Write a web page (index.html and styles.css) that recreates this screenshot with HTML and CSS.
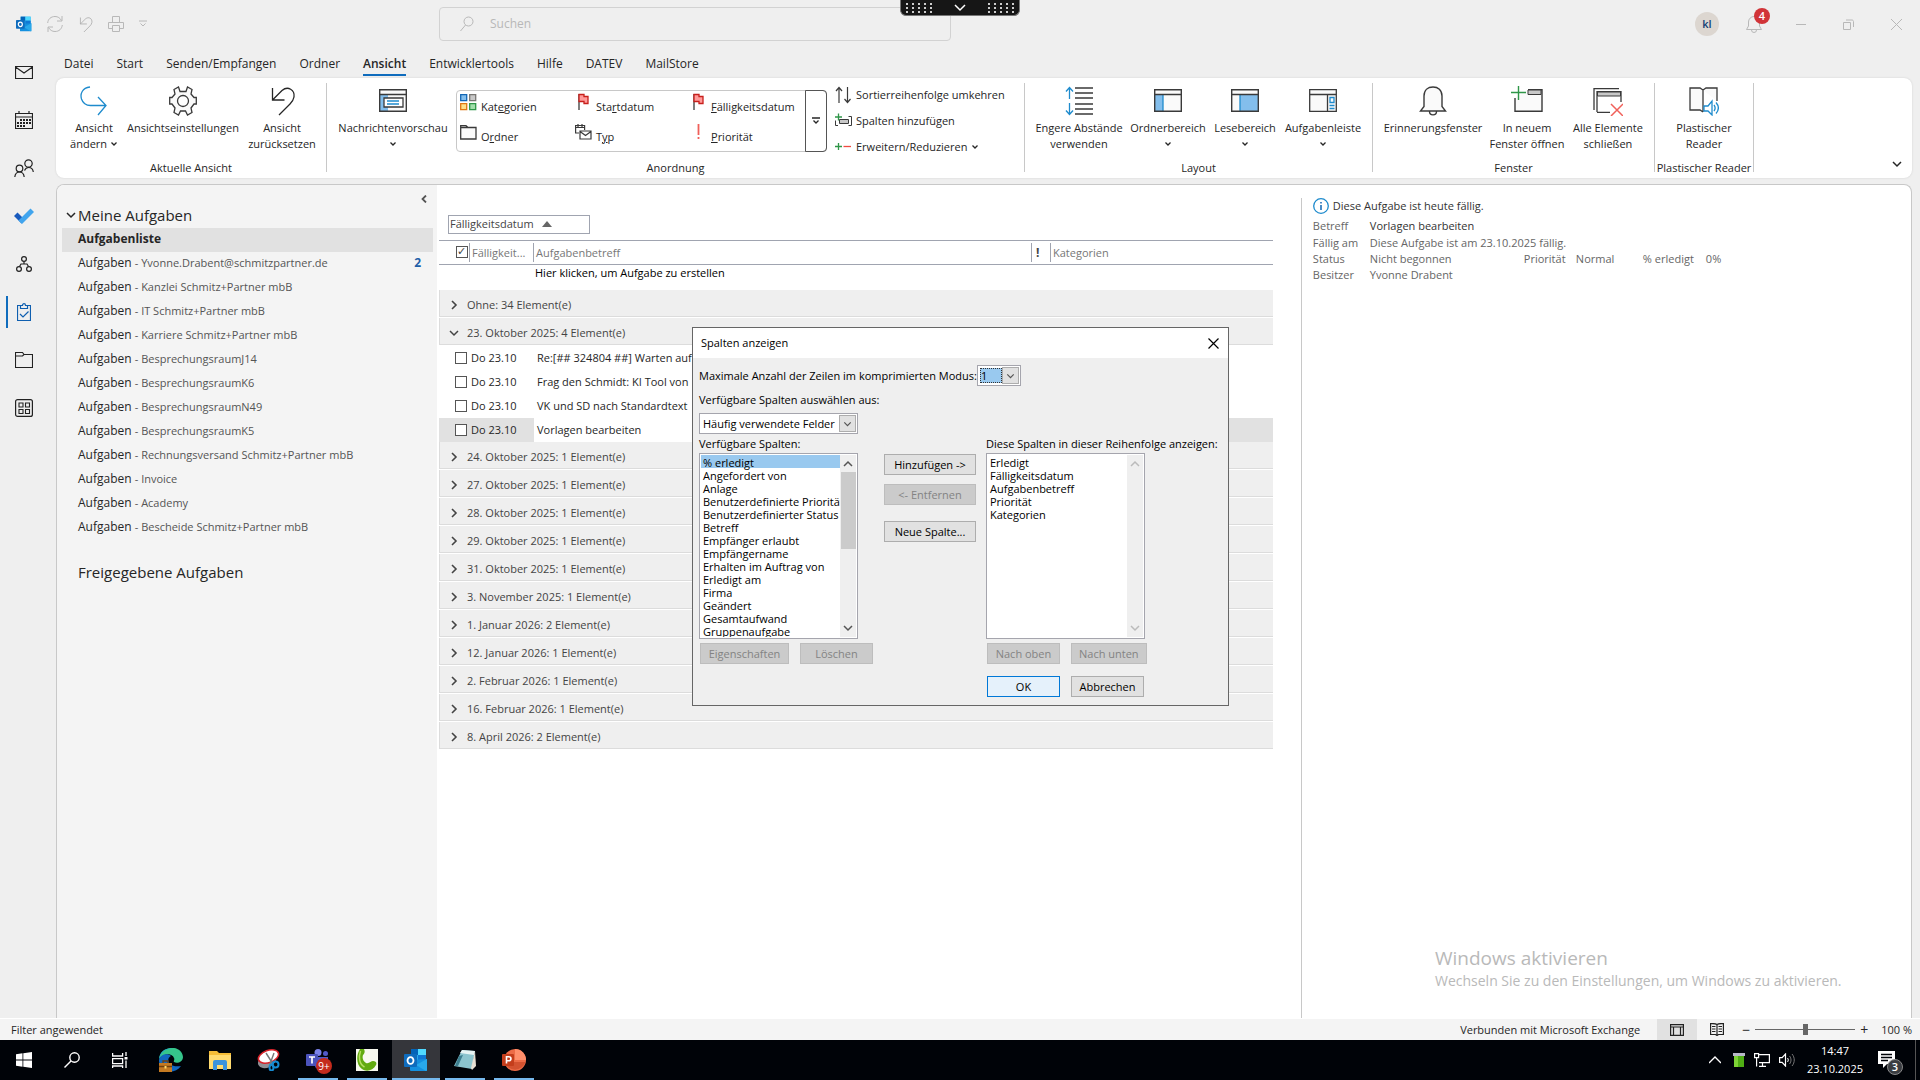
FILE: index.html
```html
<!DOCTYPE html>
<html lang="de">
<head>
<meta charset="utf-8">
<title>Aufgabenliste - Outlook</title>
<link rel="stylesheet" href="styles.css">
</head>
<body>
<svg class="sprite" aria-hidden="true">
  <symbol id="chev-down" viewBox="0 0 8 8"><path d="M1.5 2.5 4 5l2.500-2.500" fill="none" stroke="currentColor" stroke-width="1.300"/></symbol>
  <symbol id="chev-right" viewBox="0 0 10 10"><path d="M3 1l4 4-4 4" fill="none" stroke="currentColor" stroke-width="1.600"/></symbol>
  <symbol id="chev-open" viewBox="0 0 10 10"><path d="M1 3l4 4 4-4" fill="none" stroke="currentColor" stroke-width="1.500"/></symbol>
  <symbol id="undo" viewBox="0 0 28 30"><path d="M4.500 2v12h12M4.500 14 14 4.500C20 -.5 27 4 26 11c-.5 3-2 5-4 7L11 29" fill="none" stroke="currentColor" stroke-width="1.300"/></symbol>
  <symbol id="flag" viewBox="0 0 14 18"><path d="M2.500 1v16" stroke="#3a3a3a" stroke-width="1.300"/><path d="M2.500 1.500h5v2h4v7h-4v-2h-5z" fill="#ff9a9a" stroke="#c8201c" stroke-width="1.300"/></symbol>
  <symbol id="outlook" viewBox="0 0 24 24"><path d="M7 1h15v12H7z" fill="#28a8ea"/><path d="M7 1h7v6H7z" fill="#0364b8"/><path d="M14 1h8v6h-8z" fill="#50d9ff"/><path d="M14 7h8v6h-8z" fill="#0f78d4"/><path d="M6 12l17-1v11a1 1 0 0 1-1 1H7a1 1 0 0 1-1-1z" fill="#1490df"/><path d="M23 11v11a1 1 0 0 1-1 1L12 17z" fill="#28a8ea"/><rect x="0" y="6" width="13" height="13" rx="1" fill="#0f6cbd"/><ellipse cx="6.500" cy="12.500" rx="3" ry="3.400" fill="none" stroke="#fff" stroke-width="1.800"/></symbol>
</svg>

<div class="app">
  <header class="topbar">
    <div class="quick">
      <svg class="ic16"><use href="#outlook"/></svg>
      <button type="button" aria-label="Senden/Empfangen"><svg width="16" height="18" viewBox="0 0 16 18"><path d="M.7 8C1 4 4 1.500 8 1.500c3 0 5 1.500 6.500 4M15 1v5h-5M15.300 10c-.5 4-3.300 6.500-7.300 6.500-3 0-5-1.500-6.500-4M1 17v-5h5" fill="none" stroke="currentColor"/></svg></button>
      <button type="button" aria-label="Rückgängig"><svg width="15" height="17" class="bold-line"><use href="#undo"/></svg></button>
      <button type="button" aria-label="Drucken"><svg width="16" height="16" viewBox="0 0 16 16"><path d="M4.500 6V.5h7V6M4 12.500H.5v-6h15v6H12M4.500 9.500h7v6h-7z" fill="none" stroke="currentColor"/></svg></button>
      <button type="button" aria-label="Anpassen"><svg width="8" height="8" viewBox="0 0 8 8"><path d="M0 1h8M1.500 3.500 4 6l2.500-2.500" fill="none" stroke="currentColor"/></svg></button>
    </div>
    <label class="search"><svg width="14" height="16" viewBox="0 0 14 16"><circle cx="8.500" cy="5.500" r="4.500" fill="none" stroke="currentColor"/><path d="M5.500 9 .5 15" stroke="currentColor"/></svg><input type="search" placeholder="Suchen" aria-label="Suchen"></label>
    <div class="winctl">
      <span class="avatar">kl</span>
      <button type="button" class="bell" aria-label="Benachrichtigungen"><svg width="16" height="17" viewBox="0 0 16 17"><path d="M.5 13.500h15L13.500 10V6a5.500 5.500 0 0 0-11 0v4zM5.500 14a2.500 2.500 0 0 0 5 0" fill="none" stroke="currentColor"/></svg><span class="badge">4</span></button>
      <button type="button" aria-label="Minimieren"><svg width="10" height="10"><path d="M0 5.500h10" stroke="currentColor"/></svg></button>
      <button type="button" aria-label="Verkleinern"><svg width="11" height="11"><path d="M.5 3.500h7v7h-7zM3 1h6c.8 0 1.500.7 1.500 1.500V8" fill="none" stroke="currentColor"/></svg></button>
      <button type="button" aria-label="Schließen"><svg width="11" height="11"><path d="M0 0l11 11M11 0 0 11" stroke="currentColor"/></svg></button>
    </div>
    <div class="session"><i class="dots"></i><svg width="12" height="8" viewBox="0 0 12 8"><path d="M1 1l5 5 5-5" fill="none" stroke="#fff" stroke-width="1.500"/></svg><i class="dots"></i></div>
  </header>

  <div class="middle">
    <nav class="rail" aria-label="Module">
      <button type="button" aria-label="E-Mail"><svg width="18" height="13" viewBox="0 0 18 13"><path d="M.5.5h17v12H.5zM.5 1 9 7l8.500-6" fill="none" stroke="currentColor" stroke-width="1.200"/></svg></button>
      <button type="button" aria-label="Kalender"><svg width="18" height="18" viewBox="0 0 18 18"><path d="M.5 2.500h17v15H.5zM.5 6h17M4 0v3M14 0v3" fill="none" stroke="currentColor" stroke-width="1.200"/><path d="M5 9h11M2 12h14M2 15h8" stroke="currentColor" stroke-width="2" stroke-dasharray="2 1"/></svg></button>
      <button type="button" aria-label="Personen"><svg width="20" height="18" viewBox="0 0 20 18"><path d="M.8 18c.4-3.500 2-5 4.700-5s4.300 1.500 4.700 5M10.500 11.500c.8-2 2.300-3 4.200-3 2.600 0 4.200 1.500 4.600 4.500" fill="none" stroke="currentColor" stroke-width="1.200"/><circle cx="5.500" cy="9.500" r="3.300" fill="none" stroke="currentColor" stroke-width="1.200"/><circle cx="14.500" cy="4.500" r="3.700" fill="none" stroke="currentColor" stroke-width="1.200"/></svg></button>
      <button type="button" aria-label="To Do"><svg width="20" height="16" viewBox="0 0 20 16"><path d="M0 8l3.500-3.500L11 12l-3.500 3.500z" fill="#185abd"/><path d="M4.500 12.500 16.500.5 20 4 8 16z" fill="#41a5ee"/></svg></button>
      <button type="button" aria-label="Organisation"><svg width="16" height="16" viewBox="0 0 16 16"><g fill="none" stroke="currentColor" stroke-width="1.200"><circle cx="8" cy="3" r="2.400"/><circle cx="3" cy="13" r="2.400"/><circle cx="13" cy="13" r="2.400"/><path d="M8 5.500V8M3.500 10.500 5 8h6l1.500 2.500"/></g></svg></button>
      <button type="button" class="active" aria-label="Aufgaben"><svg width="14" height="18" viewBox="0 0 14 18"><path d="M3.500 2.500h-3v15h13v-15h-3M3.500 5.500v-3h2c0-2.500 3-2.500 3 0h2v3zM3 11l3 3 5.500-5.500" fill="none" stroke="currentColor" stroke-width="1.200"/></svg></button>
      <button type="button" aria-label="Ordner"><svg width="18" height="16" viewBox="0 0 18 16"><path d="M.5 15.500V.5h7l1.500 2h8.500v13zM.5 4h7L9 2.500" fill="none" stroke="currentColor" stroke-width="1.100"/></svg></button>
      <button type="button" aria-label="Weitere Apps"><svg width="18" height="18" viewBox="0 0 18 18"><rect x=".6" y=".6" width="16.800" height="16.800" rx="2" fill="none" stroke="currentColor" stroke-width="1.200"/><path d="M4 4h4v4H4zM10.500 4h4v4h-4zM4 10.500h4v4H4zM10.500 10.500h4v4h-4z" fill="none" stroke="currentColor" stroke-width="1.100"/></svg></button>
    </nav>

    <div class="content">
      <nav class="tabs">
        <a href="#">Datei</a><a href="#">Start</a><a href="#">Senden/Empfangen</a><a href="#">Ordner</a><a href="#" class="current">Ansicht</a><a href="#">Entwicklertools</a><a href="#">Hilfe</a><a href="#">DATEV</a><a href="#">MailStore</a>
      </nav>

      <section class="ribbon">
        <div class="group">
          <div class="tools view-tools">
            <button type="button"><svg width="28" height="30" viewBox="0 0 28 30"><path d="M10 1C2 2 0 8 1.500 13c1.500 4.500 5 6.500 9 6.500h15M18 11l8 8.500L18 29" fill="none" stroke="#1e8bcd" stroke-width="1.300"/></svg>Ansicht<span>ändern <svg class="c8"><use href="#chev-down"/></svg></span></button>
            <button type="button"><svg width="28" height="30" viewBox="0 0 28 30"><path d="M11 5.500 9.500 1 5 3.500l1 4.500-3 3.500H.7v6.500H3l3 4-1 4.500L9.500 29l2-4h5l2 4 4.500-2.500-1-4.500 3-4h2.300v-6.500H25L22 8l1-4.500L18.500 1 17 5.500z" fill="#fafafa" stroke="#3a3a3a" stroke-width="1.300"/><circle cx="14" cy="15" r="5.500" fill="#fff" stroke="#3a3a3a" stroke-width="1.300"/></svg>Ansichtseinstellungen</button>
            <button type="button"><svg width="28" height="30"><use href="#undo"/></svg>Ansicht<span>zurücksetzen</span></button>
          </div>
          <h2>Aktuelle Ansicht</h2>
        </div>
        <div class="group">
          <div class="tools arrange-tools">
            <button type="button"><svg width="28" height="30" viewBox="0 0 28 30"><path d="M.7 3.700h26.600v21.600H.7z" fill="#fafafa"/><path d="M1 9h8v16H1z" fill="#83beec"/><path d="M.7 3.700h26.600v21.600H.7zM.7 8.500h26.600" fill="none" stroke="#3a3a3a" stroke-width="1.400"/><path d="M5 12h19v9H5z" fill="#fff" stroke="#3a3a3a" stroke-width="1.300"/><path d="M8 15h12M8 18h12" stroke="#1e8bcd" stroke-width="1.300"/></svg>Nachrichtenvorschau<svg class="c8 drop"><use href="#chev-down"/></svg></button>
            <div class="gallery">
              <div class="gallery-items">
                <button type="button"><svg width="17" height="18" viewBox="0 0 17 18"><path d="M.7 1.700h6v6h-6z" fill="#83beec" stroke="#1266b5" stroke-width="1.300"/><path d="M9.700 1.700h6v6h-6z" fill="#c8c8c8" stroke="#797774" stroke-width="1.300"/><path d="M.7 10.700h6v6h-6z" fill="#ffe08a" stroke="#e07814" stroke-width="1.300"/><path d="M9.700 10.700h6v6h-6z" fill="#a2dfab" stroke="#2f9648" stroke-width="1.300"/></svg><span>Kat<u>e</u>gorien</span></button>
                <button type="button"><svg width="14" height="18"><use href="#flag"/></svg><span>Sta<u>r</u>tdatum</span></button>
                <button type="button"><svg width="14" height="18"><use href="#flag"/></svg><span><u>F</u>älligkeitsdatum</span></button>
                <button type="button"><svg width="17" height="18" viewBox="0 0 17 18"><path d="M.7 16V2.700H6L8 4.500h8V16zM.7 4.500H8" fill="#fafafa" stroke="#3a3a3a" stroke-width="1.300"/></svg><span>O<u>r</u>dner</span></button>
                <button type="button"><svg width="17" height="18" viewBox="0 0 17 18"><path d="M4 10H.6V2.500h9V7M.6 4.500h9M3 1v3M7 1v3" fill="none" stroke="#3a3a3a" stroke-width="1.200"/><path d="M5 8h11v8H5zM5 8.500l5.500 4L16 8.500" fill="#fff" stroke="#3a3a3a" stroke-width="1.200"/></svg><span>T<u>y</u>p</span></button>
                <button type="button"><svg width="14" height="18" viewBox="0 0 14 18"><path d="M7 1v11M7 14v2" stroke="#f0605a" stroke-width="1.800"/></svg><span><u>P</u>riorität</span></button>
              </div>
              <button type="button" class="more" aria-label="Weitere"><svg width="8" height="8" viewBox="0 0 8 8"><path d="M0 1h8M1.500 3.500 4 6l2.500-2.500" fill="none" stroke="currentColor" stroke-width="1.300"/></svg></button>
            </div>
            <div class="small-tools">
              <button type="button"><svg width="17" height="18" viewBox="0 0 17 18"><path d="M4 17V1.500M1 5l3-3.500L7 5M12.500 1v15.500M9.500 13l3 3.500 3-3.500" fill="none" stroke="#3a3a3a" stroke-width="1.200"/></svg>Sortierreihenfolge umkehren</button>
              <button type="button"><svg width="17" height="18" viewBox="0 0 17 18"><path d="M4.500 7.500h9v4h-9z" fill="#c8c8c8" stroke="#3a3a3a"/><path d="M3 13.500H.5v-5M13.500 4.500h3v9h-3" fill="none" stroke="#3a3a3a"/><path d="M0 5h7M3.500 1.500v7" stroke="#2f9648" stroke-width="1.300"/></svg>Spalten hinzufügen</button>
              <button type="button"><svg width="17" height="18" viewBox="0 0 17 18"><path d="M0 8.500h7M3.500 5v7" stroke="#2f9648" stroke-width="1.300"/><path d="M8.500 8.500H16" stroke="#f04a40" stroke-width="1.300"/></svg>Erweitern/Reduzieren <svg class="c8"><use href="#chev-down"/></svg></button>
            </div>
          </div>
          <h2>Anordnung</h2>
        </div>
        <div class="group">
          <div class="tools layout-tools">
            <button type="button"><svg width="28" height="30" viewBox="0 0 28 30"><path d="M10 2h18M10 7h18M10 12h18M10 18h18M10 23h18M10 28h18" stroke="#3a3a3a" stroke-width="1.300"/><path d="M4.500 13V1.500M1 5.500l3.500-4L8 5.500M4.500 17v11.500M1 24.500l3.500 4 3.500-4" fill="none" stroke="#1e8bcd" stroke-width="1.300"/></svg>Engere Abstände<span>verwenden</span></button>
            <button type="button"><svg width="28" height="30" viewBox="0 0 28 30"><path d="M.7 3.700h26.600v21.600H.7z" fill="#fafafa"/><path d="M1 9h8v16H1z" fill="#83beec"/><path d="M9 9v16" stroke="#1e8bcd" stroke-width="1.300"/><path d="M.7 3.700h26.600v21.600H.7zM.7 8.500h26.600" fill="none" stroke="#3a3a3a" stroke-width="1.400"/></svg>Ordnerbereich<svg class="c8 drop"><use href="#chev-down"/></svg></button>
            <button type="button"><svg width="28" height="30" viewBox="0 0 28 30"><path d="M.7 3.700h26.600v21.600H.7z" fill="#fafafa"/><path d="M9 9h18v16H9z" fill="#83beec"/><path d="M9 9v16" stroke="#1e8bcd" stroke-width="1.300"/><path d="M.7 3.700h26.600v21.600H.7zM.7 8.500h26.600" fill="none" stroke="#3a3a3a" stroke-width="1.400"/></svg>Lesebereich<svg class="c8 drop"><use href="#chev-down"/></svg></button>
            <button type="button"><svg width="28" height="30" viewBox="0 0 28 30"><path d="M.7 3.700h26.600v21.600H.7zM.7 8.500h26.600M18.500 9v16" fill="#fafafa" stroke="#3a3a3a" stroke-width="1.300"/><path d="M21 11.500h4v5h-4zM20.500 19.500h5M20.500 22.500h5" fill="none" stroke="#1e8bcd" stroke-width="1.300"/></svg>Aufgabenleiste<svg class="c8 drop"><use href="#chev-down"/></svg></button>
          </div>
          <h2>Layout</h2>
        </div>
        <div class="group">
          <div class="tools window-tools">
            <button type="button"><svg width="28" height="30" viewBox="0 0 28 30"><path d="M1.500 25h25L23 20.500V10C23 4 19 1 14 1S5 4 5 10v10.500zM10.500 25.500c0 4.500 7 4.500 7 0" fill="#fafafa" stroke="#3a3a3a" stroke-width="1.400"/></svg>Erinnerungsfenster</button>
            <button type="button"><svg width="32" height="30" viewBox="0 0 32 30"><path d="M4 12v13.300h27V3.700H17" fill="#fafafa" stroke="#3a3a3a" stroke-width="1.400"/><path d="M17 4h13v4.500H17z" fill="#c8c8c8" stroke="#3a3a3a"/><path d="M0 6.500h15M7.500-1v15" stroke="#2f9648" stroke-width="1.400"/></svg>In neuem<span>Fenster öffnen</span></button>
            <button type="button"><svg width="30" height="30" viewBox="0 0 30 30"><path d="M1 24V2.700h25M4 26V5.700h24V16M4 26.300h13" fill="none" stroke="#3a3a3a" stroke-width="1.300"/><path d="M4.500 6h23v4h-23z" fill="#c8c8c8" stroke="#3a3a3a"/><path d="M18 18l12 12M30 18 18 30" stroke="#f0605a" stroke-width="1.500"/></svg>Alle Elemente<span>schließen</span></button>
          </div>
          <h2>Fenster</h2>
        </div>
        <div class="group">
          <div class="tools reader-tools">
            <button type="button"><svg width="30" height="30" viewBox="0 0 30 30"><path d="M14 26l-3-2H1V2h10l3 2v22M14 4l3-2h11v13" fill="#fafafa" stroke="#3a3a3a" stroke-width="1.300"/><path d="M15 20h4l4-5v14l-4-4h-4zM25 19c1.500 2 1.500 4 0 6M27 16.500c3 3.500 3 7.500 0 11" fill="#fff" stroke="#1e8bcd" stroke-width="1.300"/></svg>Plastischer<span>Reader</span></button>
          </div>
          <h2>Plastischer Reader</h2>
        </div>
        <button type="button" class="collapse" aria-label="Menüband reduzieren"><svg width="10" height="10"><use href="#chev-open"/></svg></button>
      </section>

      <div class="panel">
        <aside class="folders">
          <button type="button" class="fold" aria-label="Ordnerbereich minimieren"><svg width="6" height="8" viewBox="0 0 6 8"><path d="M5 .5 1.500 4 5 7.500" fill="none" stroke="currentColor" stroke-width="1.800"/></svg></button>
          <h3><svg width="10" height="10"><use href="#chev-open"/></svg>Meine Aufgaben</h3>
          <ul>
            <li class="sel"><a href="#">Aufgabenliste</a></li>
            <li><a href="#">Aufgaben <small>- Yvonne.Drabent@schmitzpartner.de</small></a><b>2</b></li>
            <li><a href="#">Aufgaben <small>- Kanzlei Schmitz+Partner mbB</small></a></li>
            <li><a href="#">Aufgaben <small>- IT Schmitz+Partner mbB</small></a></li>
            <li><a href="#">Aufgaben <small>- Karriere Schmitz+Partner mbB</small></a></li>
            <li><a href="#">Aufgaben <small>- BesprechungsraumJ14</small></a></li>
            <li><a href="#">Aufgaben <small>- BesprechungsraumK6</small></a></li>
            <li><a href="#">Aufgaben <small>- BesprechungsraumN49</small></a></li>
            <li><a href="#">Aufgaben <small>- BesprechungsraumK5</small></a></li>
            <li><a href="#">Aufgaben <small>- Rechnungsversand Schmitz+Partner mbB</small></a></li>
            <li><a href="#">Aufgaben <small>- Invoice</small></a></li>
            <li><a href="#">Aufgaben <small>- Academy</small></a></li>
            <li><a href="#">Aufgaben <small>- Bescheide Schmitz+Partner mbB</small></a></li>
          </ul>
          <h3 class="shared">Freigegebene Aufgaben</h3>
        </aside>

        <main class="tasks">
          <button type="button" class="sort">Fälligkeitsdatum <svg width="10" height="6"><path d="M0 6l5-6 5 6z" fill="#666"/></svg></button>
          <table>
            <colgroup><col class="c-check"><col class="c-due"><col class="c-subject"><col class="c-prio"><col></colgroup>
            <thead><tr><th><div><input type="checkbox" checked aria-label="Erledigt"></div></th><th><div>Fälligkeit...</div></th><th><div>Aufgabenbetreff</div></th><th><div class="bang">!</div></th><th><div>Kategorien</div></th></tr></thead>
            <tbody>
              <tr class="new"><td></td><td></td><td colspan="3">Hier klicken, um Aufgabe zu erstellen</td></tr>
              <tr class="grp"><td colspan="5"><div><svg class="c10"><use href="#chev-right"/></svg>Ohne: 34 Element(e)</div></td></tr>
              <tr class="grp"><td colspan="5"><div><svg class="c10"><use href="#chev-open"/></svg>23. Oktober 2025: 4 Element(e)</div></td></tr>
              <tr class="task"><td><input type="checkbox" aria-label="Erledigt"></td><td>Do 23.10</td><td>Re:[## 324804 ##] Warten auf</td><td></td><td></td></tr>
              <tr class="task"><td><input type="checkbox" aria-label="Erledigt"></td><td>Do 23.10</td><td>Frag den Schmidt: KI Tool von</td><td></td><td></td></tr>
              <tr class="task"><td><input type="checkbox" aria-label="Erledigt"></td><td>Do 23.10</td><td>VK und SD nach Standardtext</td><td></td><td></td></tr>
              <tr class="task chosen"><td><input type="checkbox" aria-label="Erledigt"></td><td>Do 23.10</td><td class="edit">Vorlagen bearbeiten</td><td></td><td></td></tr>
              <tr class="grp"><td colspan="5"><div><svg class="c10"><use href="#chev-right"/></svg>24. Oktober 2025: 1 Element(e)</div></td></tr>
              <tr class="grp"><td colspan="5"><div><svg class="c10"><use href="#chev-right"/></svg>27. Oktober 2025: 1 Element(e)</div></td></tr>
              <tr class="grp"><td colspan="5"><div><svg class="c10"><use href="#chev-right"/></svg>28. Oktober 2025: 1 Element(e)</div></td></tr>
              <tr class="grp"><td colspan="5"><div><svg class="c10"><use href="#chev-right"/></svg>29. Oktober 2025: 1 Element(e)</div></td></tr>
              <tr class="grp"><td colspan="5"><div><svg class="c10"><use href="#chev-right"/></svg>31. Oktober 2025: 1 Element(e)</div></td></tr>
              <tr class="grp"><td colspan="5"><div><svg class="c10"><use href="#chev-right"/></svg>3. November 2025: 1 Element(e)</div></td></tr>
              <tr class="grp"><td colspan="5"><div><svg class="c10"><use href="#chev-right"/></svg>1. Januar 2026: 2 Element(e)</div></td></tr>
              <tr class="grp"><td colspan="5"><div><svg class="c10"><use href="#chev-right"/></svg>12. Januar 2026: 1 Element(e)</div></td></tr>
              <tr class="grp"><td colspan="5"><div><svg class="c10"><use href="#chev-right"/></svg>2. Februar 2026: 1 Element(e)</div></td></tr>
              <tr class="grp"><td colspan="5"><div><svg class="c10"><use href="#chev-right"/></svg>16. Februar 2026: 1 Element(e)</div></td></tr>
              <tr class="grp"><td colspan="5"><div><svg class="c10"><use href="#chev-right"/></svg>8. April 2026: 2 Element(e)</div></td></tr>
            </tbody>
          </table>
        </main>

        <section class="reading">
          <p class="notice"><svg width="16" height="16" viewBox="0 0 16 16"><circle cx="8" cy="8" r="7.300" fill="#fff" stroke="#1e8bcd" stroke-width="1.300"/><path d="M8 7v5M8 4v1.500" stroke="#1e6fb8" stroke-width="1.600"/></svg>Diese Aufgabe ist heute fällig.</p>
          <dl>
            <dt>Betreff</dt><dd class="wide subject">Vorlagen bearbeiten</dd>
            <dt>Fällig am</dt><dd class="wide">Diese Aufgabe ist am 23.10.2025 fällig.</dd>
            <dt>Status</dt><dd>Nicht begonnen</dd><dt>Priorität</dt><dd>Normal</dd><dt>% erledigt</dt><dd>0%</dd>
            <dt>Besitzer</dt><dd class="wide">Yvonne Drabent</dd>
          </dl>
        </section>
      </div>
    </div>
  </div>

  <footer class="status">
    <span>Filter angewendet</span>
    <div class="status-right">
      <span>Verbunden mit Microsoft Exchange</span>
      <button type="button" class="on" aria-label="Normal"><svg width="14" height="12" viewBox="0 0 14 12"><path d="M.6.6h12.800v10.800H.6zM.6 3h12.800M3.500 3v8M10.500 3v8" fill="none" stroke="#222" stroke-width="1.200"/></svg></button>
      <button type="button" aria-label="Lesen"><svg width="14" height="13" viewBox="0 0 14 13"><path d="M7 1.500C5 .3 3 .5.600.6v10.900h4.900L7 12.500l1.500-1h4.900V.6C11 .5 9 .3 7 1.500zM7 1.500v11M2 3.500h3.500M2 6h3.500M2 8.500h3.500M8.500 3.500H12M8.500 6H12M8.500 8.500H12" fill="none" stroke="#222" stroke-width="1.200"/></svg></button>
      <div class="zoom"><span>−</span><input type="range" min="0" max="100" value="50" aria-label="Zoom"><span>+</span></div>
      <span>100 %</span>
    </div>
  </footer>

  <div class="taskbar">
    <div class="launch">
      <button type="button" aria-label="Start"><svg width="16" height="16" viewBox="0 0 16 16"><path d="M0 2.200 6.500 1.300v6.300H0zM7.300 1.200 16 0v7.600H7.300zM0 8.400h6.500v6.300L0 13.800zM7.300 8.400H16V16l-8.700-1.200z" fill="#fff"/></svg></button>
      <button type="button" aria-label="Suche"><svg width="16" height="16" viewBox="0 0 16 16"><circle cx="10.500" cy="5.500" r="4.700" fill="none" stroke="#fff" stroke-width="1.400"/><path d="M7 9 .5 15.500" stroke="#fff" stroke-width="1.400"/></svg></button>
      <button type="button" aria-label="Taskansicht"><svg width="16" height="16" viewBox="0 0 16 16"><path d="M.6 1v3h10V1M.6 6.600h10v5H.6zM.6 16v-2h10v2M14 0v4M14 8.500V16" fill="none" stroke="#fff" stroke-width="1.300"/><path d="M12.500 5h3v2.500h-3z" fill="#fff"/></svg></button>
    </div>
    <div class="apps">
      <button type="button" aria-label="Edge"><svg width="24" height="24" viewBox="0 0 24 24"><path d="M0 11C1-3 23-4 24 9c0 5-6 7-9 5-1-1 1-2 0-4-2-5-10-5-15 1z" fill="#35c58b"/><path d="M0 11C1 3 8-1 14 1 7 0 2 4 0 11z" fill="#1b9de2"/><path d="M0 12C1 6 9 5 12 8c-5 2-4 12 10 10-4 6-12 7-17 4-4-3-5-6-5-10z" fill="#1168c0"/><path d="M0 15h13v9H0z" fill="#c47a22"/><path d="M4 15v-2h5v2M0 18.500h13" fill="none" stroke="#70400c" stroke-width="1.300"/><path d="M5.500 18h2v2.500h-2z" fill="#ffd868"/></svg></button>
      <button type="button" aria-label="Explorer"><svg width="22" height="20" viewBox="0 0 22 20"><path d="M0 1h8l2 2h12v16H0z" fill="#f5bd37"/><path d="M0 5h22v14H0z" fill="#ffdb70"/><path d="M4 20v-8q0-2 2-2h10q2 0 2 2v8h-4v-5H8v5z" fill="#3a93dd"/></svg></button>
      <button type="button" aria-label="Snipping Tool"><svg width="24" height="22" viewBox="0 0 24 22"><ellipse cx="10" cy="12" rx="9.500" ry="6.500" fill="#8f8f95" transform="rotate(-25 10 12)"/><ellipse cx="11.500" cy="7.500" rx="10.500" ry="6" fill="#fff" stroke="#d8232a" stroke-width="1.600" transform="rotate(-20 11.500 7.500)"/><path d="M9 4l7 11M17 4l-4 11" stroke="#777" stroke-width="1.400"/><circle cx="18.500" cy="15.500" r="3" fill="none" stroke="#168bd2" stroke-width="2"/><ellipse cx="14.500" cy="18.500" rx="2" ry="3" fill="none" stroke="#168bd2" stroke-width="2"/></svg></button>
      <button type="button" class="open" aria-label="Teams"><svg width="24" height="22" viewBox="0 0 24 22"><circle cx="12" cy="3.500" r="3.500" fill="#7b83eb"/><circle cx="19.500" cy="4.500" r="2.500" fill="#5059c9"/><path d="M8 8h14v8q-4 6-8 5-6-2-6-7z" fill="#5059c9"/><rect y="5" width="12" height="12" rx="1" fill="#4b53bc"/><path d="M3 8h6M6 8v6.500" stroke="#fff" stroke-width="1.700"/></svg><span class="badge">9+</span></button>
      <button type="button" class="open" aria-label="Telefon"><svg width="22" height="22" viewBox="0 0 22 22"><path d="M0 0h22v22H0z" fill="#f7f8ef"/><path d="M4 0h4c1 2 1 4-1 6-1 3 0 6 3 8 3 1 5-2 7-2 3 0 4 2 3 4-3 6-10 7-14 4C0 16 0 6 4 0z" fill="#62ab10"/><path d="M4.500 2C2.500 8 3 15 8.500 18" fill="none" stroke="#b7df62" stroke-width="1.500"/></svg></button>
      <button type="button" class="open front" aria-label="Outlook"><svg width="24" height="24"><use href="#outlook"/></svg></button>
      <button type="button" class="open" aria-label="Editor"><svg width="22" height="22" viewBox="0 0 22 22"><path d="M8 1l13 1-3 18L0 17z" fill="#8cc5cf"/><path d="M8 1l13 1-1 4L6 4z" fill="#e7f4f4"/><path d="M21 2l1 15-4 4-1-2z" fill="#e8e0d4"/><path d="M5 7l4-1-5 11-3 0z" fill="#3d7f90"/></svg></button>
      <button type="button" class="open" aria-label="PowerPoint"><svg width="24" height="24" viewBox="0 0 24 24"><circle cx="13" cy="12" r="11" fill="#ed6c47"/><path d="M13 1a11 11 0 0 1 11 11H13z" fill="#ff8f6b"/><path d="M2.500 14a11 11 0 0 0 21 0z" fill="#d35230"/><rect y="6" width="12" height="12" rx="1" fill="#c43e1c"/><path d="M4.500 15.500V8.800h2.200c3 0 3 4 0 4H4.500" fill="none" stroke="#fff" stroke-width="1.600"/></svg></button>
    </div>
    <div class="tray">
      <button type="button" aria-label="Ausgeblendete Symbole"><svg width="12" height="8" viewBox="0 0 12 8"><path d="M0 7l6-6 6 6" fill="none" stroke="#fff" stroke-width="1.400"/></svg></button>
      <svg width="12" height="16" viewBox="0 0 12 16"><path d="M1 4h10v11H1z" fill="#4fae14"/><path d="M1 4h4v11H1z" fill="#7ed436"/><path d="M0 1h12v3H0z" fill="#b8b8c8"/></svg>
      <svg width="16" height="14" viewBox="0 0 16 14"><path d="M5 1.600h10.400v8H5M5 13.400h7M8.500 9.600v3.800M.6.6h4v4h-4zM2.600 4.600v8.800" fill="none" stroke="#fff" stroke-width="1.200"/></svg>
      <svg width="17" height="14" viewBox="0 0 17 14"><path d="M.6 4.600h2.500L6.500 1v12L3.100 9.400H.6z" fill="none" stroke="#fff" stroke-width="1.200"/><path d="M8.500 5c1 1.200 1 2.800 0 4" fill="none" stroke="#fff"/><path d="M10.500 3c2 2.300 2 5.700 0 8M13 1c3 3.500 3 8.500 0 12" fill="none" stroke="#777"/></svg>
      <time>14:47<br>23.10.2025</time>
      <button type="button" class="note" aria-label="Info-Center"><svg width="18" height="18" viewBox="0 0 18 18"><path d="M0 0h17v13H9l-4 4v-4H0z" fill="#fff"/><path d="M3 3.500h11M3 6.500h11M3 9.500h7" stroke="#000308" stroke-width="1.300"/></svg><span class="badge">3</span></button>
    </div>
  </div>

  <div class="watermark"><strong>Windows aktivieren</strong>Wechseln Sie zu den Einstellungen, um Windows zu aktivieren.</div>

  <form class="dialog" role="dialog" aria-labelledby="dlg-title">
    <div class="dlg-head"><span id="dlg-title">Spalten anzeigen</span><button type="button" aria-label="Schließen"><svg width="11" height="11"><path d="M.5.500l10 10M10.500.5l-10 10" stroke="#000" stroke-width="1.200"/></svg></button></div>
    <div class="dlg-body">
      <div class="rowline"><label for="maxrows">Maximale Anzahl der Zeilen im komprimierten Modus:</label><span class="combo num"><select id="maxrows"><option>1</option></select><svg width="10" height="10"><use href="#chev-open"/></svg></span></div>
      <label class="lbl" for="source">Verfügbare Spalten auswählen aus:</label>
      <span class="combo wide"><select id="source"><option>Häufig verwendete Felder</option></select><svg width="10" height="10"><use href="#chev-open"/></svg></span>
      <div class="columns">
        <div class="col">
          <label for="avail">Verfügbare Spalten:</label>
          <div class="listbox"><select id="avail" size="14"><option selected>% erledigt</option><option>Angefordert von</option><option>Anlage</option><option>Benutzerdefinierte Priorität</option><option>Benutzerdefinierter Status</option><option>Betreff</option><option>Empfänger erlaubt</option><option>Empfängername</option><option>Erhalten im Auftrag von</option><option>Erledigt am</option><option>Firma</option><option>Geändert</option><option>Gesamtaufwand</option><option>Gruppenaufgabe</option></select><div class="bar"><svg class="c10"><use href="#chev-open"/></svg><i></i><svg class="c10"><use href="#chev-open"/></svg></div></div>
          <div class="btns"><button type="button" class="btn prop" disabled>Eigenschaften</button><button type="button" class="btn" disabled>Löschen</button></div>
        </div>
        <div class="mid"><button type="button" class="btn">Hinzufügen -&gt;</button><button type="button" class="btn" disabled>&lt;- Entfernen</button><button type="button" class="btn new-col">Neue Spalte...</button></div>
        <div class="col">
          <label for="shown">Diese Spalten in dieser Reihenfolge anzeigen:</label>
          <div class="listbox"><select id="shown" size="14"><option>Erledigt</option><option>Fälligkeitsdatum</option><option>Aufgabenbetreff</option><option>Priorität</option><option>Kategorien</option></select><div class="bar off"><svg class="c10"><use href="#chev-open"/></svg><svg class="c10"><use href="#chev-open"/></svg></div></div>
          <div class="btns"><button type="button" class="btn" disabled>Nach oben</button><button type="button" class="btn" disabled>Nach unten</button></div>
          <div class="btns final"><button type="submit" class="btn ok">OK</button><button type="button" class="btn">Abbrechen</button></div>
        </div>
      </div>
    </div>
  </form>
</div>
</body>
</html>
```
FILE: styles.css
```css
* { box-sizing: border-box; }
body {
  margin: 0;
  font: 11px/16px "Open Sans", "Noto Sans", sans-serif;
  color: #262626;
  background: #efefef;
}
button, input, select { font: inherit; color: inherit; margin: 0; }
button { background: none; border: 0; padding: 0; }
a { color: inherit; text-decoration: none; }
h2, h3, p, ul, dl, dd { margin: 0; padding: 0; font-weight: 400; list-style: none; }
svg { display: block; flex: none; }
.sprite { position: absolute; width: 0; height: 0; }
.ic16 { width: 16px; height: 16px; }
.c8 { width: 8px; height: 8px; display: inline-block; }
.c10 { width: 10px; height: 10px; }
.app { position: relative; display: flex; flex-direction: column; min-height: 100vh; overflow: hidden; }

/* title bar */
.topbar { position: relative; display: flex; align-items: center; height: 48px; color: #b8b8b8; }
.quick { display: flex; align-items: center; gap: 15px; width: 439px; padding-left: 16px; }
.bold-line { stroke-width: 2px; color: #a0a0a0; }
.search { display: flex; align-items: center; gap: 14px; width: 512px; height: 34px; padding-left: 20px; border: 1px solid #d2d2d2; border-radius: 4px; }
.search input { flex: 1; border: 0; background: none; font-size: 12px; outline: 0; }
.search input::placeholder { color: #b8b8b8; opacity: 1; }
.winctl { display: flex; align-items: center; gap: 37px; margin-left: auto; padding-right: 18px; }
.avatar { width: 24px; height: 24px; margin-right: -2px; border-radius: 50%; background: #dcd6d0; color: #0f3c74; font-weight: 600; line-height: 24px; text-align: center; }
.bell { position: relative; margin: 0 -3px 0 -8px; }
.badge { position: absolute; width: 16px; height: 16px; border-radius: 50%; color: #fff; text-align: center; font-weight: 600; }
.bell .badge { left: 8px; top: -8px; background: #d13438; }
.session { position: absolute; left: 900px; top: 0; display: flex; align-items: center; justify-content: space-between; width: 120px; height: 16px; padding: 0 4px; background: #161616; border: 1px solid #777; border-top: 0; border-radius: 0 0 6px 6px; }
.dots { width: 28px; height: 12px; background: radial-gradient(circle at 2px 2px, #ccc 1px, transparent 1px) 0 0 / 6px 4px; }

/* module rail */
.middle { display: flex; flex: 1; }
.rail { width: 56px; }
.rail button { display: flex; align-items: center; justify-content: center; width: 48px; height: 48px; color: #222; }
.rail .active { color: #0f5fb0; background: linear-gradient(#0f6cbd, #0f6cbd) 6px 8px / 2px 32px no-repeat; }
.content { display: flex; flex-direction: column; flex: 1; min-width: 0; }
.tabs { display: flex; gap: 23px; height: 30px; padding: 4px 0 0 8px; font-size: 12px; line-height: 24px; }
.tabs .current { height: 24px; line-height: 24px; font-weight: 600; box-shadow: inset 0 -2px #0f6cbd; }

/* ribbon */
.ribbon { position: relative; display: flex; margin-right: 8px; padding: 5px 0 6px; background: #fff; border-radius: 8px; box-shadow: 0 0 2px #ccc; }
.group { display: flex; flex-direction: column; justify-content: space-between; height: 89px; border-right: 1px solid #c8c8c8; }
.group h2 { font-size: 11px; line-height: 8px; text-align: center; }
.tools { display: grid; color: #262626; }
.tools > button { display: flex; flex-direction: column; align-items: center; padding-top: 3px; white-space: nowrap; }
.tools > button > svg:first-child { margin-bottom: 4px; }
.drop { margin-top: 4px; }
.view-tools { grid-template-columns: 56px 122px 76px; padding: 0 6px 0 10px; }
.arrange-tools { grid-template-columns: 118px 371px 180px; gap: 4px; padding: 0 13px 0 7px; }
.layout-tools { grid-template-columns: 94px 84px 70px 86px; padding: 0 6px 0 7px; }
.window-tools { grid-template-columns: 106px 82px 80px; padding: 0 6px 0 7px; }
.reader-tools { grid-template-columns: 98px; }
.gallery { display: flex; height: 62px; margin-top: 7px; border: 1px solid #c8c8c8; border-radius: 4px; }
.gallery-items { display: grid; grid-template-columns: 115px 115px 116px; grid-template-rows: 30px 30px; flex: 1; padding-left: 3px; }
.gallery-items button { display: flex; gap: 4px; align-items: flex-start; padding-top: 2px; white-space: nowrap; }
.gallery-items button > svg { width: 17px; }
.gallery-items span { padding-top: 6px; }
.more { width: 24px; margin: -1px; border: 1px solid #555; border-radius: 0 4px 4px 0; display: flex; align-items: center; justify-content: center; }
.small-tools { display: flex; flex-direction: column; gap: 10px; padding: 4px 0 0 4px; }
.small-tools button { display: flex; align-items: center; gap: 4px; height: 16px; white-space: nowrap; }
.collapse { margin: auto 10px 3px auto; }

/* main panel */
.panel { display: flex; flex: 1; margin: 6px 8px 0 0; background: #fff; border: 1px solid #c8c8c8; border-bottom: 0; border-radius: 8px 8px 0 0; overflow: hidden; }
.folders { width: 380px; padding: 10px 4px 0 5px; background: #f4f4f4; }
.fold { display: block; margin: 0 6px 0 auto; color: #555; }
.folders h3 { display: flex; align-items: center; gap: 2px; padding: 0 0 1px 4px; font-size: 15px; line-height: 24px; }
.folders .shared { padding-left: 16px; margin-top: 20px; }
.folders li { display: flex; justify-content: space-between; height: 24px; padding: 0 12px 0 16px; font-size: 12px; line-height: 22px; }
.folders li b { color: #1e5fa8; }
.folders small { font-size: 11px; color: #555; }
.folders .sel { background: #e1e1e1; font-weight: 700; }
.tasks { flex: 842 1 0; padding: 30px 0 0 2px; min-width: 0; }
.sort { display: flex; align-items: center; gap: 8px; width: 142px; height: 19px; margin: 0 0 6px 9px; padding: 0 1px 2px; border: 1px solid #a0a4b0; color: #444; }
.tasks table { width: 100%; border-collapse: separate; border-spacing: 0; table-layout: fixed; }
.c-check { width: 31px; }
.c-due { width: 64px; }
.c-subject { width: 498px; }
.c-prio { width: 19px; }
.tasks th { height: 25px; padding: 0; border: solid #a0a4b0; border-width: 1px 0; font-weight: 400; text-align: left; color: #777; }
.tasks th div { height: 19px; padding-left: 2px; line-height: 19px; border-right: 1px solid #a0a4b0; white-space: nowrap; }
.tasks th:first-child div { padding: 3px 0 0 17px; }
.tasks th:last-child div { border: 0; }
.tasks .bang { font-weight: 700; font-size: 12px; padding-left: 4px; color: #444; }
.tasks td { padding: 0; white-space: nowrap; overflow: hidden; }
.tasks input { appearance: none; display: block; width: 12px; height: 12px; border: 1px solid #555; background: #fff; }
.tasks input:checked::after { content: "✓"; display: block; font: 700 11px/10px "DejaVu Sans", sans-serif; color: #444; }
.tasks .new td { height: 24px; padding: 0 0 9px 1px; color: #000; }
.grp td { height: 28px; }
.tasks .grp td { padding-bottom: 1px; }
.grp div { display: flex; align-items: center; gap: 8px; height: 27px; padding: 4px 0 0 9px; background: #efefef; border-bottom: 1px solid #dcdcdc; border-left: 1px solid #dcdcdc; color: #444; }
.tasks .task td { height: 24px; padding: 0 0 1px 3px; }
.tasks .task td:first-child { padding-left: 16px; }
.tasks .task td:nth-child(2) { padding-left: 1px; }
.chosen td { background: #e1e1e1; }
.chosen .edit { background: #fff; }
.reading { flex: 604 1 0; margin: 13px 0 0 28px; padding-left: 11px; border-left: 1px solid #c8c8c8; color: #666; }
.notice { display: flex; gap: 4px; color: #333; margin-bottom: 4px; }
.reading dl { display: grid; grid-template-columns: 57px 154px 52px 67px 63px 1fr; line-height: 16px; }
.reading .wide { grid-column: span 5; }
.reading .subject { color: #333; padding-bottom: 1px; }

/* status bar */
.status { display: flex; justify-content: space-between; align-items: center; height: 22px; padding: 0 8px 0 11px; background: #f4f4f4; border-top: 1px solid #fff; }
.status-right { display: flex; align-items: center; height: 21px; }
.status-right button { display: flex; align-items: center; justify-content: center; width: 40px; height: 21px; }
.status-right .on { margin-left: 17px; background: #e1e1e1; }
.zoom { display: flex; align-items: center; gap: 5px; margin: 0 13px 0 5px; font-size: 14px; }
.zoom input { appearance: none; width: 100px; height: 11px; background: linear-gradient(#666, #666) 0 5px / 100% 1px no-repeat; }
.zoom input::-webkit-slider-thumb { appearance: none; width: 5px; height: 11px; background: #666; }

/* taskbar */
.taskbar { display: flex; height: 40px; background: #000308; color: #fff; }
.launch, .apps { display: flex; }
.launch { margin-right: 3px; }
.apps { gap: 1px; }
.taskbar button { position: relative; display: flex; align-items: center; justify-content: center; }
.launch button, .apps button { width: 48px; height: 40px; }
.apps .open { background: linear-gradient(#76b9ed, #76b9ed) center bottom / 40px 2px no-repeat; }
.apps .front { background: linear-gradient(#76b9ed, #76b9ed) center bottom / 100% 2px no-repeat #35363b; }
.apps .badge { left: 22px; top: 18px; background: #c42b1c; font-size: 10px; font-weight: 400; }
.tray { display: flex; align-items: center; gap: 9px; margin: 0 4px 0 auto; padding-right: 19px; border-right: 1px solid #555; }
.tray button:first-child { margin-right: 3px; }
.tray time { margin-left: 2px; line-height: 18px; text-align: center; }
.tray .note { margin-left: 6px; }
.note .badge { left: 9px; top: 8px; background: #3a3d42; border: 1px solid #888; line-height: 14px; }

.watermark { position: absolute; left: 1435px; bottom: 89px; color: #b9b9b9; font-size: 14px; line-height: 20px; }
.watermark strong { display: block; font-size: 19px; font-weight: 400; line-height: 26px; }

/* column dialog */
.dialog { position: absolute; left: 692px; top: 327px; width: 537px; background: #efefef; border: 1px solid #666; color: #000; }
.dlg-head { display: flex; align-items: center; justify-content: space-between; height: 30px; padding: 0 9px 0 8px; background: #fff; }
.dlg-body { padding: 7px 6px 8px; }
.rowline { display: flex; align-items: center; white-space: nowrap; }
.lbl { display: block; margin: 6px 0 5px; }
.combo { position: relative; display: block; height: 21px; padding: 2px; background: #fff; border: 1px solid #a5a5ad; }
.combo select { appearance: none; display: block; width: 100%; height: 15px; padding: 0 1px; border: 0; border-radius: 0; background: none; line-height: 15px; outline: 0; }
.combo svg { position: absolute; right: 1px; top: 1px; width: 17px; height: 17px; padding: 4px 3px 3px; background: #e1e1e1; border: 1px solid #adadad; color: #555; pointer-events: none; }
.combo.num { width: 44px; }
.num select { width: 22px; background: #99c9ef; border: 1px dotted #333; padding: 0; line-height: 13px; }
.combo.wide { width: 159px; }
.columns { display: grid; grid-template-columns: 175px 92px 1fr; column-gap: 10px; margin-top: 2px; }
.col > label { display: block; margin-bottom: 1px; line-height: 16px; white-space: nowrap; }
.listbox { display: flex; width: 159px; height: 186px; padding: 1px; background: #fff; border: 1px solid #a5a5ad; }
.listbox select { flex: 1; min-width: 0; height: 182px; padding: 0; border: 0; border-radius: 0; background: none; overflow: hidden; outline: 0; }
.listbox option { height: 13px; min-height: 13px; padding: 0 2px; line-height: 11px; }
.listbox option:checked { background: #99c9ef linear-gradient(#99c9ef, #99c9ef); color: #000; }
.bar { display: flex; flex-direction: column; align-items: center; justify-content: space-between; width: 16px; padding: 4px 0; background: #efefef; color: #555; }
.bar svg:first-child { transform: rotate(180deg); }
.bar i { width: 15px; height: 77px; margin: 3px 0 auto; background: #cbcbcb; }
.bar.off { color: #bbb; }
.btns { display: flex; gap: 11px; margin: 4px 0 0 1px; }
.btn { min-width: 73px; height: 21px; padding: 0 7px; background: #e1e1e1; border: 1px solid #adadad; line-height: 19px; white-space: nowrap; }
.btn:disabled { background: #cbcbcb; border-color: #bdbdbd; color: #838383; }
.btn.ok { background: #e5f1fb; border-color: #0078d7; }
.btn.prop { min-width: 89px; }
.final { margin-top: 12px; }
.mid { display: flex; flex-direction: column; gap: 9px; padding-top: 18px; }
.new-col { margin-top: 7px; }
```
